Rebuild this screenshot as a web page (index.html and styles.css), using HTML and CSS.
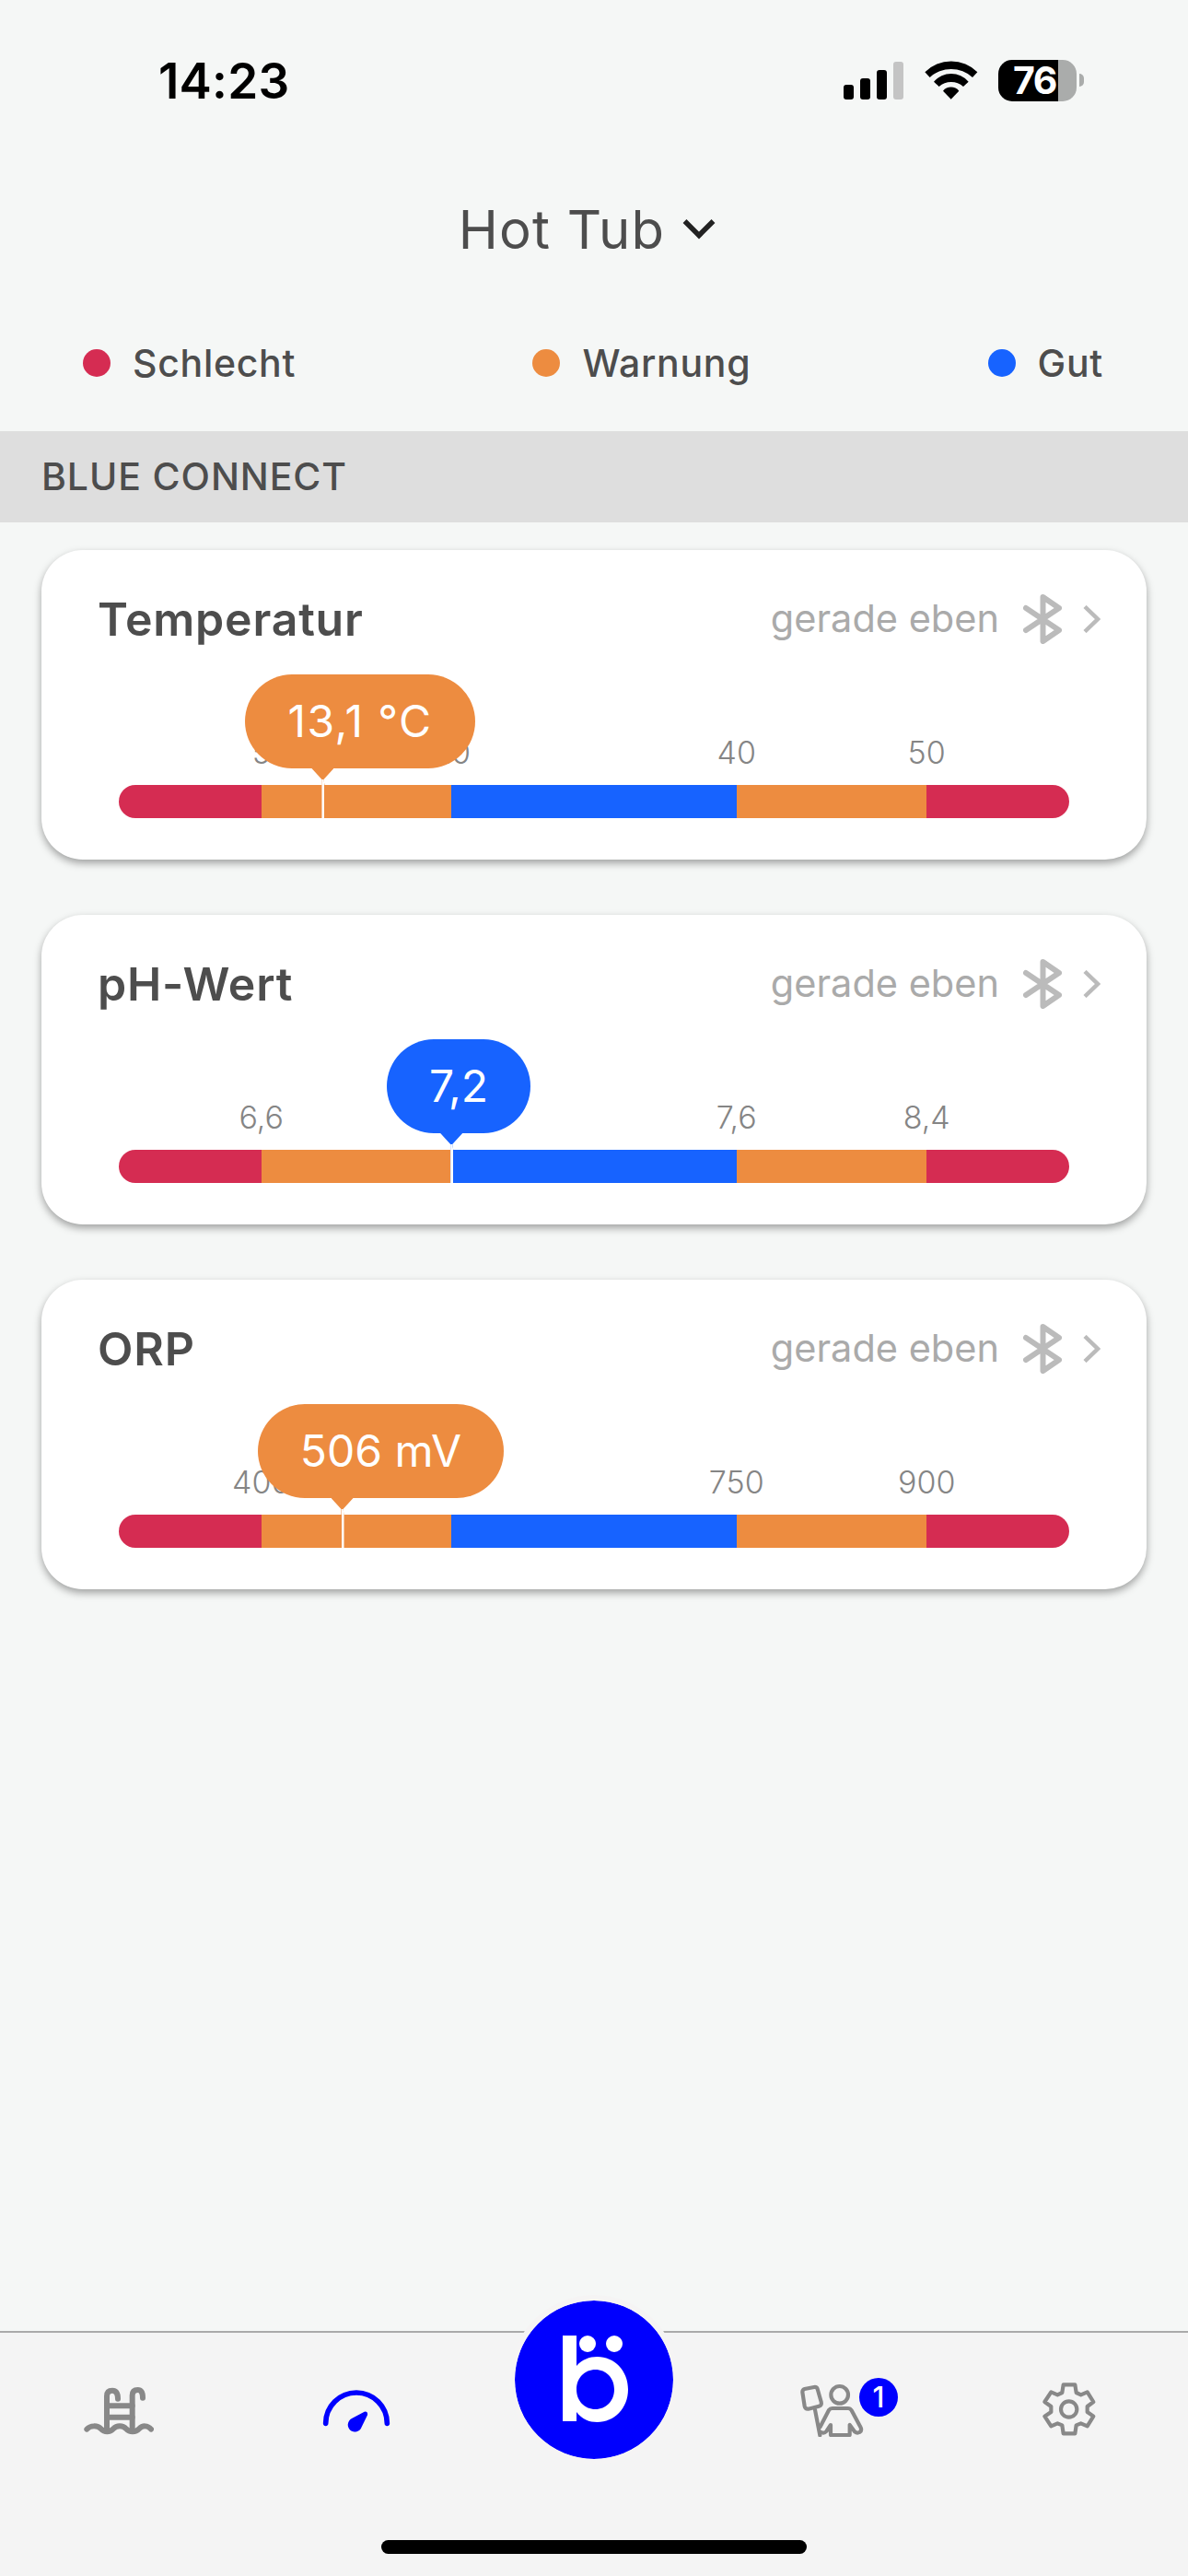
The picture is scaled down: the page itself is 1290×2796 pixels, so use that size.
FILE: index.html
```html
<!DOCTYPE html>
<html lang="de">
<head>
  <meta charset="UTF-8">
  <meta name="viewport" content="width=device-width, initial-scale=1.0">
  <title>Blue Connect</title>
  <link rel="stylesheet" href="styles.css">
</head>

<body>
  <!-- shared icons of the measurement cards -->
  <svg class="sprite" width="0" height="0">
    <symbol id="bluetooth" viewBox="0 0 42 54">
      <path d="M3 15L39 39L21.5 51V3L39 15L3 39" fill="none" stroke="#bbb" stroke-width="6" stroke-linecap="round" stroke-linejoin="round"/>
    </symbol>
    <symbol id="chevron" viewBox="0 0 19 30">
      <path d="M2 1.5L16 15L2 28.5" fill="none" stroke="#bbb" stroke-width="4.5"/>
    </symbol>
  </svg>

  <div class="app">
    <div class="statusBar">
      <span class="time">14:23</span>
      <div class="statusIcons">
        <svg class="signal" width="65" height="41" viewBox="0 0 65 41">
          <rect x="0" y="25" width="11" height="16" rx="3"/>
          <rect x="18" y="18" width="11" height="23" rx="3"/>
          <rect x="36" y="9" width="11" height="32" rx="3"/>
          <rect x="54" y="0" width="11" height="41" rx="3" fill="#c4c4c4"/>
        </svg>
        <svg class="wifi" width="58" height="42" viewBox="431 76 174 126">
          <path d="M432 113A121 121 0 0 1 603 113L587 130A103 103 0 0 0 448 130Z"/>
          <path d="M461 144A75 75 0 0 1 574 144L557 160A59 59 0 0 0 478 160Z"/>
          <path d="M491 174A33 33 0 0 1 543 174L517 201Z"/>
        </svg>
        <div class="battery">76</div>
        <div class="batteryTip"></div>
      </div>
    </div>

    <div class="header">
      <h1>Hot Tub</h1>
      <svg width="36" height="24" viewBox="0 0 36 24">
        <path d="M2.5 3L18 18.5L33.5 3" fill="none" stroke="#222" stroke-width="5.5"/>
      </svg>
    </div>

    <div class="legend">
      <div class="legendItem"><span class="dot bad"></span>Schlecht</div>
      <div class="legendItem"><span class="dot warn"></span>Warnung</div>
      <div class="legendItem"><span class="dot good"></span>Gut</div>
    </div>

    <h2 class="section">BLUE CONNECT</h2>

    <div class="cards">
      <div class="card">
        <div class="cardHeader">
          <h3>Temperatur</h3>
          <span class="ago">gerade eben</span>
          <svg class="bluetooth"><use href="#bluetooth"/></svg>
          <svg class="chevron"><use href="#chevron"/></svg>
        </div>
        <div class="gauge">
          <div class="labels"><span>5</span><span>20</span><span></span><span>40</span><span>50</span></div>
          <div class="bar">
            <i class="bad"></i><i class="warn"></i><i class="good"></i><i class="warn"></i><i class="bad"></i>
          </div>
          <div class="needle warn" style="left: 21.46%"></div>
          <div class="bubble wide warn" style="left: 13.28%; width: 250px">13,1 °C</div>
        </div>
      </div>

      <div class="card">
        <div class="cardHeader">
          <h3>pH-Wert</h3>
          <span class="ago">gerade eben</span>
          <svg class="bluetooth"><use href="#bluetooth"/></svg>
          <svg class="chevron"><use href="#chevron"/></svg>
        </div>
        <div class="gauge">
          <div class="labels"><span>6,6</span><span></span><span></span><span>7,6</span><span>8,4</span></div>
          <div class="bar">
            <i class="bad"></i><i class="warn"></i><i class="good"></i><i class="warn"></i><i class="bad"></i>
          </div>
          <div class="needle good" style="left: 35%"></div>
          <div class="bubble good" style="left: 28.2%; width: 156px">7,2</div>
        </div>
      </div>

      <div class="card">
        <div class="cardHeader">
          <h3>ORP</h3>
          <span class="ago">gerade eben</span>
          <svg class="bluetooth"><use href="#bluetooth"/></svg>
          <svg class="chevron"><use href="#chevron"/></svg>
        </div>
        <div class="gauge">
          <div class="labels"><span>400</span><span></span><span></span><span>750</span><span>900</span></div>
          <div class="bar">
            <i class="bad"></i><i class="warn"></i><i class="good"></i><i class="warn"></i><i class="bad"></i>
          </div>
          <div class="needle warn" style="left: 23.5%"></div>
          <div class="bubble warn" style="left: 14.63%; width: 267px">506 mV</div>
        </div>
      </div>
    </div>

    <div class="tabBar">
      <div class="tabs">
        <div class="tab">
          <svg width="76" height="60" viewBox="91 74 228 180" fill="none" stroke="#888" stroke-width="18" stroke-linecap="round" stroke-linejoin="round">
            <path d="M166 235V121Q166 103 184 103Q202 103 202 130"/>
            <path d="M249 235V119Q249 101 267 101Q283 101 283 127"/>
            <path d="M167 153H249M167 190H249"/>
            <path d="M101 229C112 216 136 216 147 228C158 240 176 240 187 228C198 216 218 216 229 228C240 240 260 240 271 228C282 216 299 216 310 229"/>
          </svg>
        </div>
        <div class="tab">
          <svg width="74" height="60" viewBox="870 74 222 180">
            <path d="M881 210A100 100 0 0 1 1081 210" fill="none" stroke="#0000fe" stroke-width="17" stroke-linecap="round"/>
            <path d="M1007 172Q1019 170 1017 183L998 222A23 23 0 1 1 966 194Z" fill="#0000fe"/>
          </svg>
        </div>
        <div class="tab">
          <div class="logo">
            <svg width="74" height="96" viewBox="0 0 74 96" fill="#fff">
              <rect x="2" y="1" width="15" height="93"/>
              <circle cx="29" cy="10" r="9"/>
              <circle cx="58" cy="10" r="9"/>
              <path fill-rule="evenodd" d="M17 34C23 27 31 24 39.500 24C58 24 73 39 73 59.500C73 80 58 95 39.500 95C31 95 23 92 17 84ZM37.500 38C26 38 17 47 17 59.500C17 72 26 81 37.500 81C49 81 58 72 58 59.500C58 47 49 38 37.500 38Z"/>
            </svg>
          </div>
        </div>
        <div class="tab">
          <svg width="70" height="60" viewBox="86 74 210 180" fill="none" stroke="#888" stroke-width="12.500" stroke-linecap="round" stroke-linejoin="round">
            <circle cx="217" cy="117" r="28"/>
            <path d="M103 98L134 92Q143 91 145 98L157 140Q160 152 150 154L115 163Q105 164 103 154L96 108Q96 100 103 98Z"/>
            <path d="M137 166L153 249"/>
            <path d="M154 221L182 167Q186 161 193 161H244Q252 161 256 168L285 222Q291 233 282 239Q274 243 266 237L250 215V248H188V215L174 236Q167 244 157 239"/>
          </svg>
          <span class="badge">1</span>
        </div>
        <div class="tab">
          <svg width="60" height="60" viewBox="872 74 180 180" fill="none" stroke="#888" stroke-width="12.500" stroke-linejoin="round">
            <path d="M943 84H981L985 110L1000 117L1021 108L1041 140L1021 155V173L1041 187L1021 219L1000 210L985 216L981 243H943L939 216L924 210L903 219L882 187L903 173V155L882 140L903 108L924 117L939 110Z"/>
            <circle cx="961" cy="164" r="26"/>
          </svg>
        </div>
      </div>
      <div class="homeIndicator"></div>
    </div>
  </div>
</body>
</html>
```
FILE: styles.css
```css
* {
  box-sizing: border-box;
}

body {
  margin: 0;
  background-color: #f5f7f6;
  color: #4d4d4d;
  font-family: Inter, "Liberation Sans", sans-serif;
}

h1, h2, h3 {
  margin: 0;
}

svg {
  display: block;
}

.sprite {
  position: absolute;
}

.app {
  display: flex;
  flex-direction: column;
  width: 1290px;
  height: 2796px;
}

.bad {
  background-color: #d52c52;
}

.warn {
  background-color: #ed8c40;
}

.good {
  background-color: #1763ff;
}

/* status bar */
.statusBar {
  display: flex;
  align-items: center;
  justify-content: space-between;
  height: 174px;
  padding: 0 113px 0 172px;
  color: #000;
}

.time {
  padding-top: 2px;
  font-size: 53px;
  font-weight: 600;
  letter-spacing: 0.2px;
}

.statusIcons {
  display: flex;
  align-items: center;
}

.wifi {
  margin-left: 23px;
}

.battery {
  width: 85px;
  height: 45px;
  margin-left: 22px;
  padding-left: 16px;
  border-radius: 15px;
  background: linear-gradient(to right, #000 65px, #aaacab 65px);
  color: #fff;
  font-size: 41px;
  font-weight: 700;
  line-height: 45px;
  letter-spacing: -1.5px;
}

.batteryTip {
  width: 5px;
  height: 14px;
  margin-left: 3px;
  border-radius: 0 5px 5px 0;
  background-color: #aaacab;
}

/* pool selector */
.header {
  display: flex;
  align-items: center;
  justify-content: center;
  gap: 19px;
  height: 150px;
  padding-right: 15px;
}

.header h1 {
  font-size: 58px;
  font-weight: 400;
  letter-spacing: 1.2px;
}

.legend {
  display: flex;
  align-items: center;
  justify-content: space-between;
  height: 144px;
  padding: 0 92px 4px 90px;
  font-size: 41px;
  font-weight: 500;
  letter-spacing: 0.7px;
}

.legendItem {
  display: flex;
  align-items: center;
}

.dot {
  width: 30px;
  height: 30px;
  margin-right: 24px;
  border-radius: 50%;
}

.section {
  height: 99px;
  padding-left: 45px;
  background-color: #dedede;
  font-size: 41px;
  font-weight: 500;
  line-height: 98px;
  letter-spacing: 0.9px;
}

/* measurement cards */
.cards {
  display: flex;
  flex: 1;
  flex-direction: column;
  gap: 60px;
  padding: 30px 45px;
}

.card {
  height: 336px;
  padding-top: 45px;
  border-radius: 45px;
  background-color: #fff;
  box-shadow: 0 4px 8px rgba(0, 0, 0, 0.35);
}

.cardHeader {
  display: flex;
  align-items: center;
  height: 60px;
  padding: 0 50px 0 61px;
}

.cardHeader h3 {
  flex: 1;
  font-size: 50px;
  font-weight: 600;
  letter-spacing: 0.8px;
}

.ago {
  padding-bottom: 3px;
  color: #aaa;
  font-size: 41.5px;
}

.bluetooth {
  width: 42px;
  height: 54px;
  margin-left: 26px;
}

.chevron {
  width: 19px;
  height: 30px;
  margin-left: 23px;
}

.gauge {
  position: relative;
  margin: 94px 84px 0;
}

.labels {
  display: grid;
  grid-template-columns: 2fr 2fr 1fr 2fr 2fr;
  height: 40px;
  padding: 0 5%;
  color: #858585;
  font-size: 34px;
  font-weight: 300;
  line-height: 42px;
  text-align: center;
}

.bar {
  display: grid;
  grid-template-columns: 15fr 20fr 30fr 20fr 15fr;
  height: 36px;
  margin-top: 16px;
  border-radius: 18px;
  overflow: hidden;
}

/* arrow under the bubble, white line over the bar */
.needle {
  position: absolute;
  bottom: 0;
  width: 24px;
  height: 54px;
  margin-left: -12px;
  clip-path: polygon(0 0, 100% 0, 13px 12px, 14px 18px, 14px 100%, 11px 100%, 11px 18px, 11px 12px);
}

.needle::after {
  content: "";
  position: absolute;
  top: 12px;
  bottom: 0;
  left: 11px;
  width: 3px;
  background-color: #fff;
}

.bubble {
  position: absolute;
  top: -64px;
  height: 102px;
  border-radius: 51px;
  color: #fff;
  font-size: 48px;
  line-height: 102px;
  text-align: center;
  white-space: nowrap;
}

.bubble.wide {
  letter-spacing: 1.4px;
}

/* bottom navigation */
.tabBar {
  height: 266px;
  border-top: 2px solid #aaa;
  background-color: #f4f4f4;
}

.tabs {
  display: grid;
  grid-template-columns: repeat(5, 1fr);
  height: 166px;
}

.tab {
  position: relative;
  display: flex;
  align-items: center;
  justify-content: center;
}

.logo {
  display: flex;
  align-items: center;
  justify-content: center;
  width: 184px;
  height: 184px;
  margin-top: -65px;
  padding: 0 0 2px 2px;
  border: 6px solid #f5f4f4;
  border-radius: 50%;
  background-color: #0000fe;
  background-clip: padding-box;
}

.badge {
  position: absolute;
  top: 49px;
  left: 159px;
  width: 42px;
  height: 42px;
  border-radius: 50%;
  background-color: #0000fe;
  color: #fff;
  font-size: 31px;
  font-weight: 500;
  line-height: 42px;
  text-align: center;
}

.homeIndicator {
  width: 462px;
  height: 15px;
  margin: 59px auto 0;
  border-radius: 8px;
  background-color: #000;
}
```
